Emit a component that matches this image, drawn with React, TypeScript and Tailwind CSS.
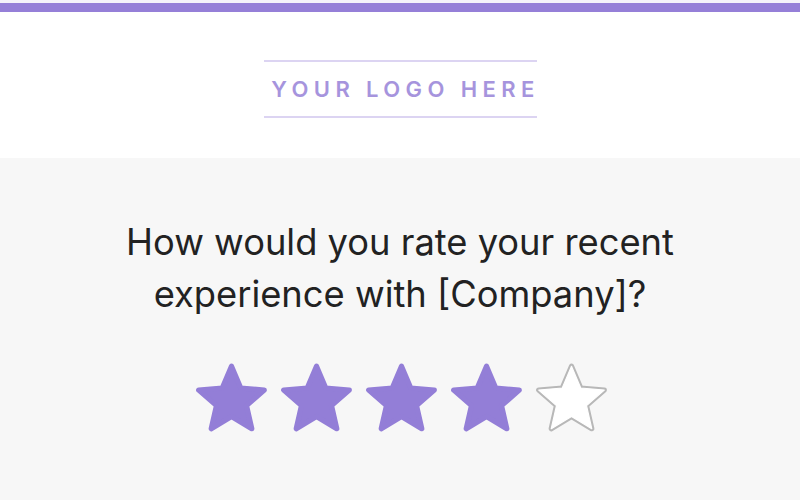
import React from "react";

const pts =
  "50,7 62.3,36 93.7,38.8 70,59.5 77,90.2 50,74 23,90.2 30,59.5 6.3,38.8 37.7,36";

function Star({ filled }: { filled: boolean }) {
  return (
    <svg width="75" height="75" viewBox="0 0 100 100" className="shrink-0">
      {filled ? (
        <polygon points={pts} fill="#937ed7" stroke="#937ed7" strokeWidth="7" strokeLinejoin="round" />
      ) : (
        <>
          <polygon points={pts} fill="#b8b8b8" stroke="#b8b8b8" strokeWidth="7" strokeLinejoin="round" />
          <polygon points={pts} fill="#ffffff" stroke="#ffffff" strokeWidth="1.6" strokeLinejoin="round" />
        </>
      )}
    </svg>
  );
}

export default function App() {
  return (
    <div className="w-[800px] h-[500px] overflow-hidden flex flex-col bg-white" style={{ fontFamily: "Inter, 'Open Sans', sans-serif" }}>
      <div className="h-[3px] bg-[#f4f2fa]" />
      <div className="h-[9px] bg-[#957fd8]" />
      <div className="h-[146px] flex justify-center pt-[48px]">
        <div className="w-[273px] h-[58px] border-y-2 border-[#dcd4f2] flex items-center justify-center">
          <span className="whitespace-nowrap shrink-0 text-[22px] font-semibold tracking-[0.245em] text-[#a694dd] leading-none pl-[11px]">
            YOUR LOGO HERE
          </span>
        </div>
      </div>
      <div className="flex-1 bg-[#f7f7f7] flex flex-col items-center pt-[58px]">
        <p className="text-[36.3px] leading-[52px] text-[#222222] text-center font-normal whitespace-nowrap">
          How would you rate your recent
          <br />
          experience with [Company]?
        </p>
        <div className="flex gap-[10px] mt-[41px] ml-[3px]">
          <Star filled />
          <Star filled />
          <Star filled />
          <Star filled />
          <Star filled={false} />
        </div>
      </div>
    </div>
  );
}
